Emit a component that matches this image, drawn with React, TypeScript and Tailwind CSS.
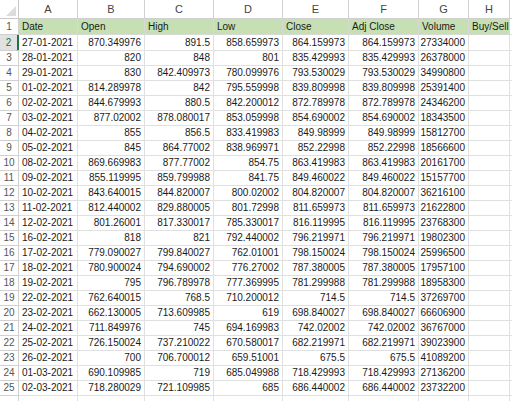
import React from 'react'

const rows: (string | number)[][] = [
  ['27-01-2021', '870.349976', '891.5', '858.659973', '864.159973', '864.159973', '27334000'],
  ['28-01-2021', '820', '848', '801', '835.429993', '835.429993', '26378000'],
  ['29-01-2021', '830', '842.409973', '780.099976', '793.530029', '793.530029', '34990800'],
  ['01-02-2021', '814.289978', '842', '795.559998', '839.809998', '839.809998', '25391400'],
  ['02-02-2021', '844.679993', '880.5', '842.200012', '872.789978', '872.789978', '24346200'],
  ['03-02-2021', '877.02002', '878.080017', '853.059998', '854.690002', '854.690002', '18343500'],
  ['04-02-2021', '855', '856.5', '833.419983', '849.98999', '849.98999', '15812700'],
  ['05-02-2021', '845', '864.77002', '838.969971', '852.22998', '852.22998', '18566600'],
  ['08-02-2021', '869.669983', '877.77002', '854.75', '863.419983', '863.419983', '20161700'],
  ['09-02-2021', '855.119995', '859.799988', '841.75', '849.460022', '849.460022', '15157700'],
  ['10-02-2021', '843.640015', '844.820007', '800.02002', '804.820007', '804.820007', '36216100'],
  ['11-02-2021', '812.440002', '829.880005', '801.72998', '811.659973', '811.659973', '21622800'],
  ['12-02-2021', '801.26001', '817.330017', '785.330017', '816.119995', '816.119995', '23768300'],
  ['16-02-2021', '818', '821', '792.440002', '796.219971', '796.219971', '19802300'],
  ['17-02-2021', '779.090027', '799.840027', '762.01001', '798.150024', '798.150024', '25996500'],
  ['18-02-2021', '780.900024', '794.690002', '776.27002', '787.380005', '787.380005', '17957100'],
  ['19-02-2021', '795', '796.789978', '777.369995', '781.299988', '781.299988', '18958300'],
  ['22-02-2021', '762.640015', '768.5', '710.200012', '714.5', '714.5', '37269700'],
  ['23-02-2021', '662.130005', '713.609985', '619', '698.840027', '698.840027', '66606900'],
  ['24-02-2021', '711.849976', '745', '694.169983', '742.02002', '742.02002', '36767000'],
  ['25-02-2021', '726.150024', '737.210022', '670.580017', '682.219971', '682.219971', '39023900'],
  ['26-02-2021', '700', '706.700012', '659.51001', '675.5', '675.5', '41089200'],
  ['01-03-2021', '690.109985', '719', '685.049988', '718.429993', '718.429993', '27136200'],
  ['02-03-2021', '718.280029', '721.109985', '685', '686.440002', '686.440002', '23732200'],
]

const headers = ['Date', 'Open', 'High', 'Low', 'Close', 'Adj Close', 'Volume', 'Buy/Sell']
const letters = ['A', 'B', 'C', 'D', 'E', 'F', 'G', 'H']

const cols = 'grid grid-cols-[19px_59px_67px_69px_69px_66px_70px_50px_41px_1fr]'

export default function App() {
  return (
    <div className="w-[512px] h-[401px] overflow-hidden bg-white text-[10px] text-[#1a1a1a] font-['Liberation_Sans',Arial,sans-serif]">
      {/* column letters */}
      <div className={`${cols} h-[19px]`}>
        <div className="relative border-r border-b border-[#c9c9c9]">
          <svg className="absolute right-[2px] bottom-[2px]" width="10" height="10" viewBox="0 0 10 10">
            <polygon points="10,0 10,10 0,10" fill="#dcdcdc" />
          </svg>
        </div>
        {letters.map(l => (
          <div key={l} className="flex items-center justify-center border-r border-b border-[#d0d0d0] text-[11px] text-[#444]">
            {l}
          </div>
        ))}
        <div className="border-b border-[#d0d0d0]" />
      </div>

      {/* header row */}
      <div className={`${cols} h-[16px]`}>
        <div className="flex items-center justify-center border-r border-b border-[#d0d0d0] text-[#555]">1</div>
        {headers.map(h => (
          <div key={h} className="flex items-center px-[3px] bg-[#c6e0b4] border-r border-b border-[#d8d8d8] whitespace-nowrap overflow-hidden">
            {h}
          </div>
        ))}
        <div className="border-b border-[#e0e0e0]" />
      </div>

      {rows.map((r, i) => (
        <div key={i} className={`${cols} h-[15px]`}>
          {i === 0 ? (
            <div className="flex items-center justify-center bg-[#e1e1e1] border-r-2 border-r-[#217346] border-b border-b-[#d0d0d0] text-[#217346]">2</div>
          ) : (
            <div className="flex items-center justify-center border-r border-b border-[#d0d0d0] text-[#555]">{i + 2}</div>
          )}
          {r.map((v, j) => (
            <div
              key={j}
              className={`flex items-center px-[3px] border-r border-b border-[#e0e0e0] whitespace-nowrap ${j === 0 ? 'justify-start' : 'justify-end'}`}
            >
              {v}
            </div>
          ))}
          <div className="border-r border-b border-[#e0e0e0]" />
          <div className="border-b border-[#e0e0e0]" />
        </div>
      ))}

      <div className={`${cols} h-[15px]`}>
        <div className="border-r border-[#d0d0d0]" />
        {letters.map(l => (
          <div key={l} className="border-r border-[#e0e0e0]" />
        ))}
        <div />
      </div>
    </div>
  )
}
